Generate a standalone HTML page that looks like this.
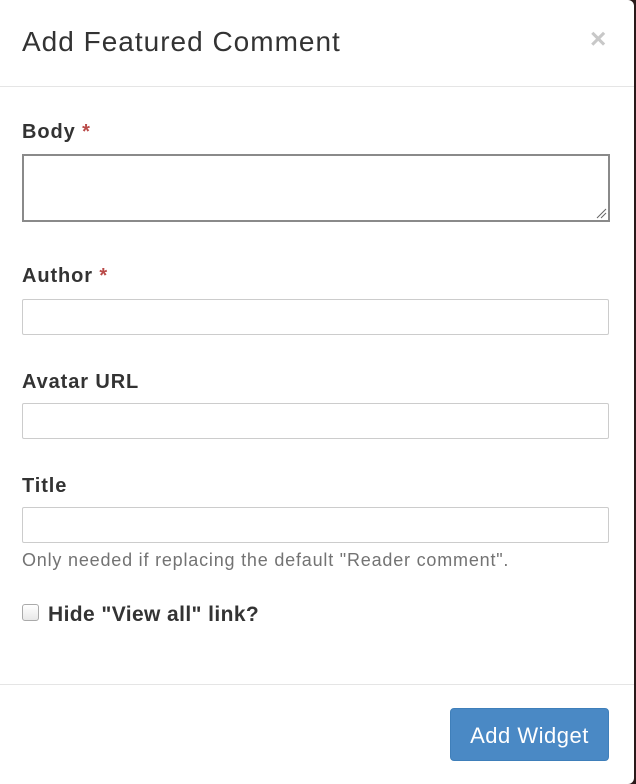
<!DOCTYPE html>
<html><head><style>
html,body{margin:0;padding:0;width:636px;height:784px;overflow:hidden;background:#2a1a1a;font-family:"Liberation Sans",Arial,sans-serif;color:#333}
.m{position:absolute;left:0;top:0;width:634px;height:784px;background:#fff;border-radius:0 6px 6px 0}
.hd{position:absolute;left:0;top:0;width:634px;height:86px;border-bottom:1px solid #e5e5e5}
.hd h1{position:absolute;left:22px;top:26px;margin:0;font-size:28px;font-weight:normal;line-height:32px;letter-spacing:1px}
.x{position:absolute;left:590px;top:24px;font-size:28px;font-weight:bold;color:#c8c8c8;line-height:30px}
.lb{position:absolute;left:22px;font-size:20px;font-weight:bold;line-height:24px;letter-spacing:0.9px}
.lb span{color:#b94a48}
.in{position:absolute;left:22px;border:1px solid #ccc;border-radius:2px;box-sizing:border-box;width:587px;height:36px}
.ta{position:absolute;left:22px;top:154px;width:588px;height:68px;border:2px solid #8a8a8a;box-sizing:border-box}
.help{position:absolute;left:22px;top:550px;font-size:18px;color:#737373;letter-spacing:0.8px}
.cb{position:absolute;left:22px;top:604px;width:15px;height:15px;border:1px solid #aaa;border-radius:3px;background:linear-gradient(#fff,#e8e8e8)}
.ft{position:absolute;left:0;top:684px;width:634px;border-top:1px solid #e5e5e5}
.btn{position:absolute;left:450px;top:708px;width:159px;height:53px;background:#4a89c5;border:1px solid #3f7fba;border-radius:4px;box-sizing:border-box;color:#fff;font-size:22px;text-align:center;line-height:53px;letter-spacing:0.5px}
</style></head><body>
<div class="m">
<div class="hd"><h1>Add Featured Comment</h1><div class="x">×</div></div>
<div class="lb" style="top:120px">Body <span>*</span></div>
<div class="ta"><svg style="position:absolute;right:1px;bottom:1px" width="12" height="12"><path d="M11 2L2 11M11 6L6 11" stroke="#666" stroke-width="1"/></svg></div>
<div class="lb" style="top:264px">Author <span>*</span></div>
<div class="in" style="top:299px"></div>
<div class="lb" style="top:370px">Avatar URL</div>
<div class="in" style="top:403px"></div>
<div class="lb" style="top:474px">Title</div>
<div class="in" style="top:507px"></div>
<div class="help">Only needed if replacing the default "Reader comment".</div>
<div class="cb"></div>
<div class="lb" style="left:48px;top:603px;font-size:21px;letter-spacing:0.4px">Hide "View all" link?</div>
<div class="ft"></div>
<div class="btn">Add Widget</div>
</div>
</body></html>
